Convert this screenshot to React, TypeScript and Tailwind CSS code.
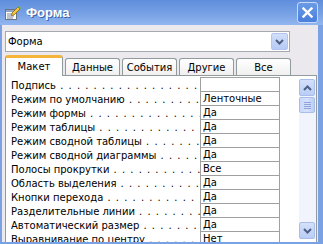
import React from "react";

const rows: [string, string][] = [
  ["Подпись", ""],
  ["Режим по умолчанию", "Ленточные"],
  ["Режим формы", "Да"],
  ["Режим таблицы", "Да"],
  ["Режим сводной таблицы", "Да"],
  ["Режим сводной диаграммы", "Да"],
  ["Полосы прокрутки", "Все"],
  ["Область выделения", "Да"],
  ["Кнопки перехода", "Да"],
  ["Разделительные линии", "Да"],
  ["Автоматический размер", "Да"],
  ["Выравнивание по центру", "Нет"],
];

const dots = "\u00a0.".repeat(60);

function FormIcon() {
  return (
    <svg width="17" height="16" viewBox="0 0 17 16">
      <rect x="1.5" y="4.5" width="11" height="10" fill="#fdfdfd" stroke="#6b7484" />
      <rect x="2" y="5" width="10" height="2" fill="#8fa3c2" />
      <line x1="3" y1="9" x2="8" y2="9" stroke="#7d8796" />
      <line x1="3" y1="11" x2="10" y2="11" stroke="#7d8796" />
      <line x1="3" y1="13" x2="9" y2="13" stroke="#7d8796" />
      <polygon points="8,8 14,2 16,4 10,10 7.5,10.5" fill="#f2c640" stroke="#8a6a10" strokeWidth="0.8" />
      <polygon points="14,2 15,1 17,3 16,4" fill="#6cb33a" />
    </svg>
  );
}

function Chevron({ up }: { up?: boolean }) {
  return (
    <svg width="9" height="6" viewBox="0 0 9 6">
      <polyline
        points={up ? "1,5 4.5,1.5 8,5" : "1,1 4.5,4.5 8,1"}
        fill="none"
        stroke="#4d6185"
        strokeWidth="2"
      />
    </svg>
  );
}

export default function App() {
  return (
    <div
      className="w-[323px] h-[244px] overflow-hidden flex flex-col bg-[#7aa1e4] text-[10px] text-black"
      style={{ fontFamily: '"DejaVu Sans", Verdana, sans-serif' }}
    >
      {/* Title bar */}
      <div className="h-[25px] shrink-0 flex items-center bg-[linear-gradient(to_bottom,#5f8edc,#7aa3e6_60%,#92b6ef)]">
        <div className="ml-[4px] mt-[1px] flex items-center">
          <FormIcon />
        </div>
        <span
          className="ml-[5px] text-[13px] font-bold text-white [text-shadow:1px_1px_0_#3b63a8]"
          style={{ fontFamily: '"Liberation Sans", Arial, sans-serif' }}
        >
          Форма
        </span>
        <div className="ml-auto mr-[5px] w-[21px] h-[21px] rounded-[3px] border border-[#c9d8f5] bg-[linear-gradient(to_bottom,#6b9be6,#4a7fdc)] flex items-center justify-center">
          <svg width="11" height="11" viewBox="0 0 11 11">
            <path d="M1.5 1.5 L9.5 9.5 M9.5 1.5 L1.5 9.5" stroke="#fff" strokeWidth="2.4" strokeLinecap="square" />
          </svg>
        </div>
      </div>

      {/* Body */}
      <div className="flex-1 ml-[2px] mr-[5px] mb-[2px] bg-[#ebe9ed] pt-[6px] pl-[3px] pr-[1px] overflow-hidden flex flex-col">
        {/* Combo */}
        <div className="w-[285px] h-[21px] shrink-0 bg-white border border-[#a5a9b0] flex items-center">
          <span className="pl-[2px] flex-1">Форма</span>
          <div className="w-[17px] h-[17px] mr-px rounded-[2px] border border-[#b3c5ee] bg-[linear-gradient(to_bottom,#d2dffa,#b6caf5)] flex items-center justify-center">
            <Chevron />
          </div>
        </div>

        {/* Tabs */}
        <div className="mt-[3px] h-[21px] shrink-0 flex items-end gap-[2px] -mb-px relative z-10">
          <div className="w-[58px] h-[21px] bg-white border-x border-[#919b9c] rounded-t-[3px] border-t-[3px] border-t-[#f5b43a] flex items-center justify-center pb-[2px]">
            Макет
          </div>
          {["Данные", "События", "Другие", "Все"].map((t) => (
            <div
              key={t}
              className="w-[55px] h-[17px] mb-px border border-b-0 border-[#919b9c] rounded-t-[3px] bg-[linear-gradient(to_bottom,#ffffff,#f1f0ef)] flex items-center justify-center pt-px"
            >
              {t}
            </div>
          ))}
        </div>

        {/* Panel */}
        <div className="flex-1 bg-white border border-[#919b9c] pt-[2px] pl-[5px] flex">
          <div className="flex flex-col">
            {rows.map(([label, value], i) => (
              <div key={label} className="flex h-[14px] shrink-0">
                <div className="w-[189px] flex items-center overflow-hidden whitespace-nowrap">
                  <span className="shrink-0">{label}</span>
                  <span className="flex-1 overflow-hidden tracking-[1px] pr-[3px]">{dots}</span>
                </div>
                <div
                  className={
                    "w-[80px] border-x border-b border-[#a0a0a0] flex items-center pl-[2px] " +
                    (i === 0 ? "border-t h-[15px] -mt-px" : "")
                  }
                >
                  {value}
                </div>
              </div>
            ))}
          </div>
          {/* Scrollbar */}
          <div className="ml-auto mt-px w-[17px] h-[160px] bg-[#f1f4fc] flex flex-col">
            <div className="h-[17px] w-[16px] rounded-[2px] border border-[#a9bdea] bg-[linear-gradient(to_bottom,#d4e0fb,#b9cdf6)] flex items-center justify-center">
              <Chevron up />
            </div>
            <div className="mt-px h-[16px] w-[16px] rounded-[2px] border border-[#a9bdea] bg-[linear-gradient(to_right,#c9d8fb,#d6e2fc,#bccef7)] flex flex-col items-center justify-center gap-[1px]">
              <div className="w-[7px] h-px bg-[#8ea4d6]" />
              <div className="w-[7px] h-px bg-[#8ea4d6]" />
              <div className="w-[7px] h-px bg-[#8ea4d6]" />
              <div className="w-[7px] h-px bg-[#8ea4d6]" />
            </div>
            <div className="flex-1" />
            <div className="h-[17px] w-[16px] rounded-[2px] border border-[#a9bdea] bg-[linear-gradient(to_bottom,#d4e0fb,#b9cdf6)] flex items-center justify-center">
              <Chevron />
            </div>
          </div>
        </div>
      </div>
    </div>
  );
}
